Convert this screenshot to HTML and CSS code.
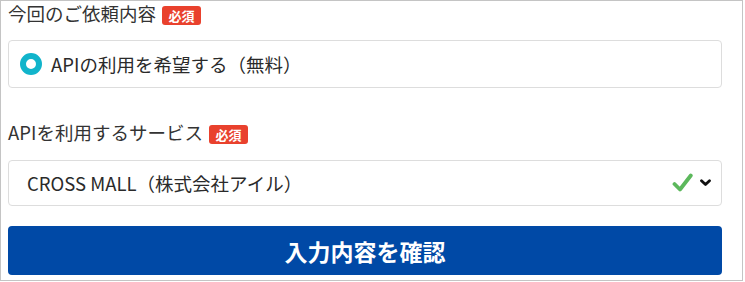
FILE: index.html
```html
<!DOCTYPE html>
<html lang="ja">
<head>
<meta charset="utf-8">
<title>お問い合わせ</title>
<link rel="stylesheet" href="styles.css">
</head>
<body>
<div class="frame">
  <div class="field">
    <div class="label">今回のご依頼内容<span class="badge">必須</span></div>
    <label class="radio-box"><span class="radio"></span><span class="radio-text">APIの利用を希望する（無料）</span></label>
  </div>
  <div class="field field-service">
    <div class="label">APIを利用するサービス<span class="badge">必須</span></div>
    <div class="select-box">
      <span class="select-text">CROSS MALL（株式会社アイル）</span>
      <svg class="check" width="21" height="20" viewBox="0 0 21 20"><path d="M2.5 11 L8 16.5 L18.8 2.5" fill="none" stroke="#5cb85c" stroke-width="3.8" stroke-linecap="round" stroke-linejoin="round"/></svg>
      <svg class="chevron" width="11" height="8" viewBox="0 0 11 8"><path d="M1.5 1.8 L5.5 5.6 L9.5 1.8" fill="none" stroke="#111" stroke-width="2.8" stroke-linecap="round" stroke-linejoin="round"/></svg>
    </div>
  </div>
  <button class="submit" type="button">入力内容を確認</button>
</div>
</body>
</html>
```
FILE: styles.css
```css
html, body {
  margin: 0;
  padding: 0;
  background: #ffffff;
}

body {
  font-family: "Noto Sans CJK JP", "Noto Sans", sans-serif;
  color: #333333;
}

.frame {
  box-sizing: border-box;
  width: 743px;
  height: 281px;
  border: 1px solid #c4c4c4;
  padding: 0 20px 0 7px;
  display: flex;
  flex-direction: column;
}

.field {
  display: flex;
  flex-direction: column;
}

.field-service {
  margin-top: 32px;
}

.label {
  display: flex;
  align-items: flex-start;
  font-size: 18.5px;
  line-height: 24px;
  height: 24px;
  margin-bottom: 15px;
}

.badge {
  display: inline-flex;
  align-items: center;
  justify-content: center;
  box-sizing: border-box;
  width: 39px;
  height: 19px;
  margin-left: 6px;
  margin-top: 5px;
  background: #e9412d;
  color: #ffffff;
  border-radius: 3px;
  font-size: 13px;
  font-weight: 700;
  line-height: 1;
}

.field-service .label {
  margin-bottom: 16px;
}

.radio-box {
  box-sizing: border-box;
  height: 48px;
  border: 1px solid #dddddd;
  border-radius: 4px;
  display: flex;
  align-items: center;
  padding-left: 11px;
  font-size: 18.5px;
}

.radio {
  box-sizing: border-box;
  width: 22px;
  height: 22px;
  border-radius: 50%;
  border: 6px solid #11b4cb;
  background: #ffffff;
  flex: none;
}

.radio-text {
  margin-left: 9px;
  color: #2a2a2a;
}

.select-box {
  box-sizing: border-box;
  height: 46px;
  border: 1px solid #dddddd;
  border-radius: 4px;
  display: flex;
  align-items: center;
  padding: 0 10px 0 18px;
  font-size: 18.5px;
}

.select-text {
  color: #2a2a2a;
}

.check {
  margin-left: auto;
  flex: none;
}

.chevron {
  margin-left: 7px;
  flex: none;
}

.submit {
  margin-top: 20px;
  height: 49px;
  border: none;
  border-radius: 4px;
  background: #0049a6;
  color: #ffffff;
  font-family: "Noto Sans CJK JP", "Noto Sans", sans-serif;
  font-size: 23px;
  font-weight: 700;
  padding: 0;
  cursor: pointer;
}
```
